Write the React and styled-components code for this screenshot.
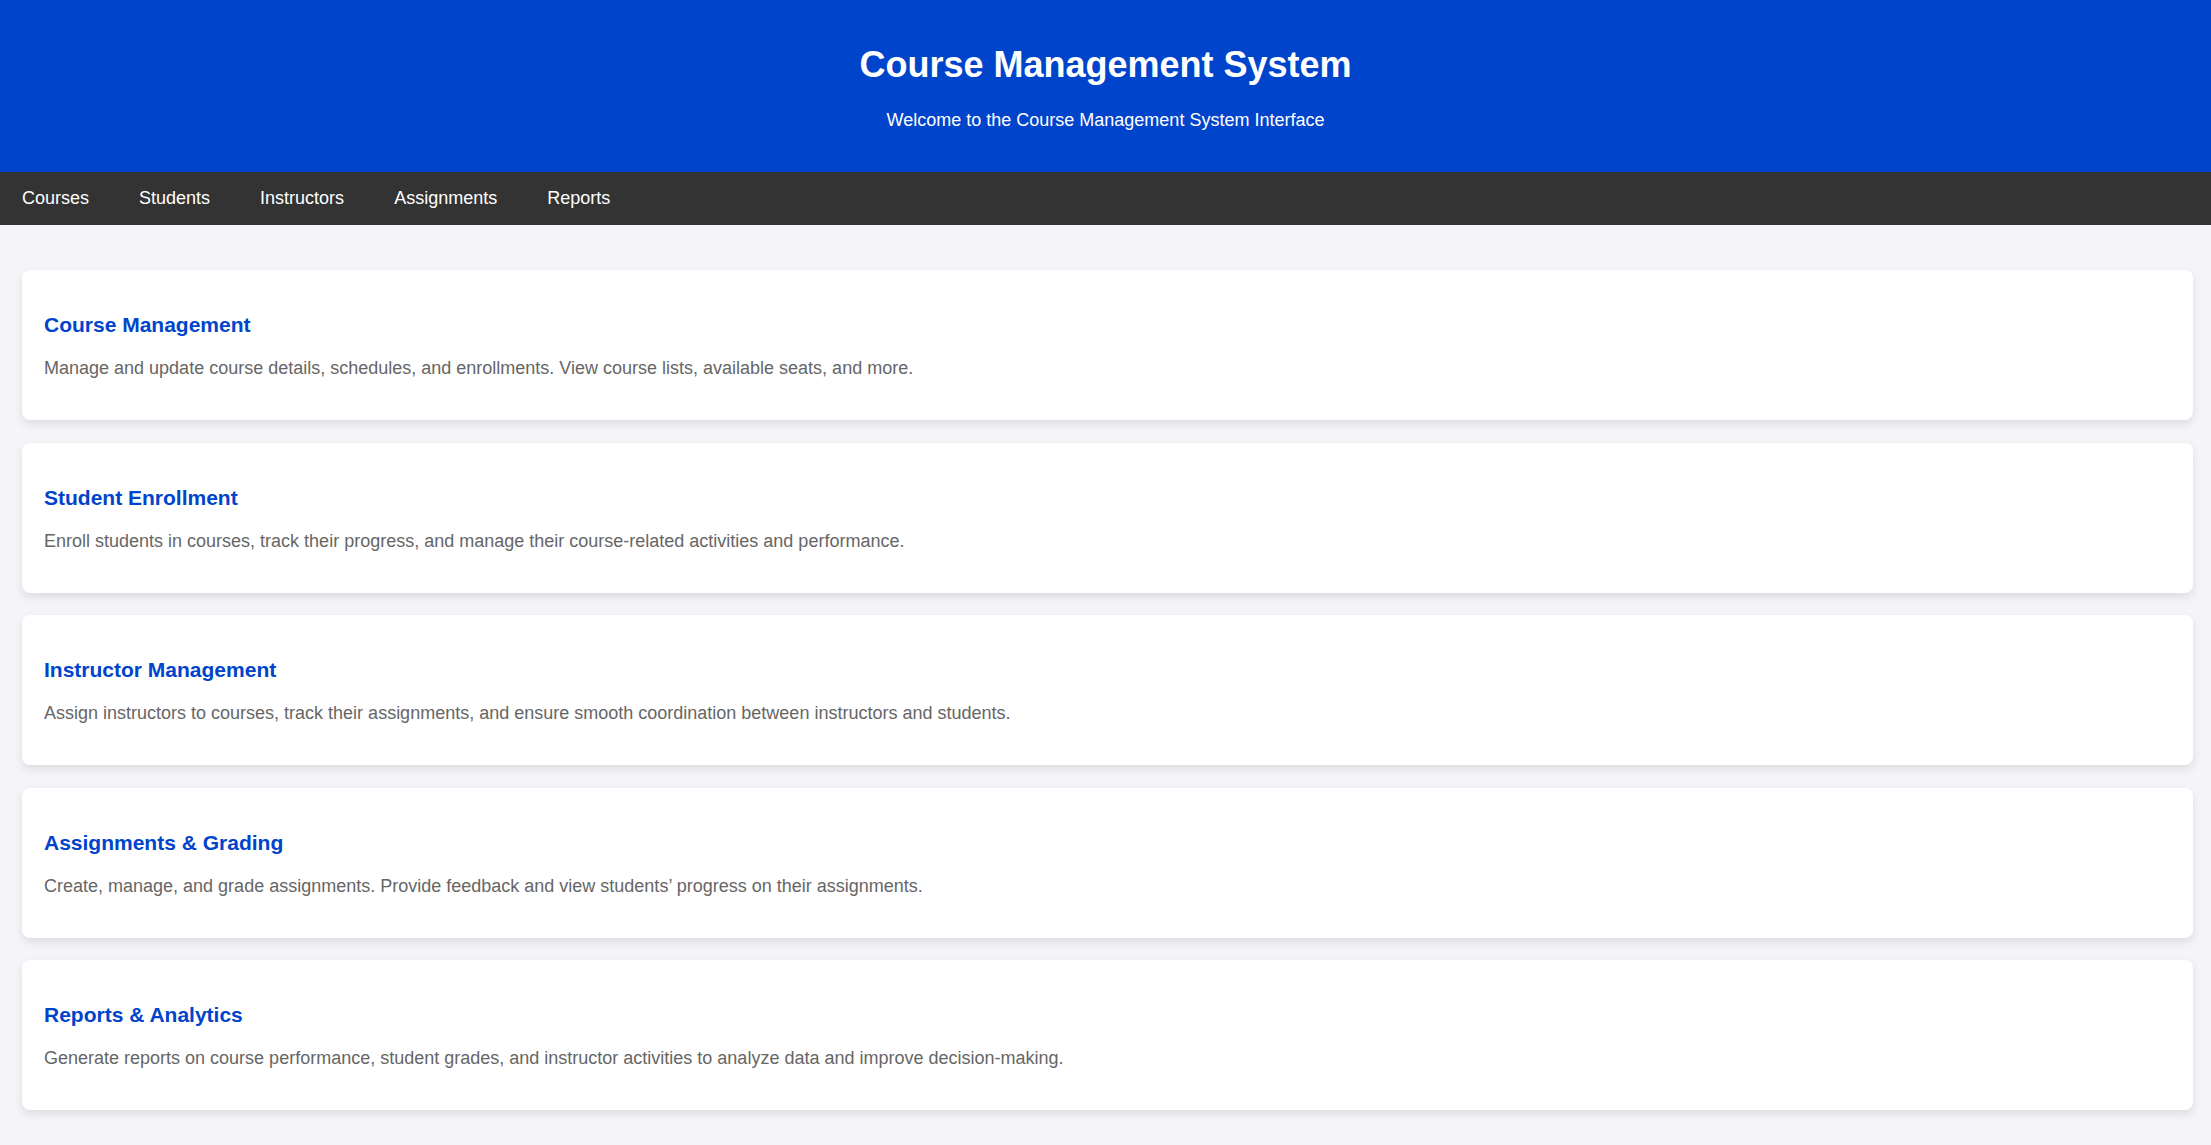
import React from 'react';
import styled, { createGlobalStyle } from 'styled-components';

const GlobalStyle = createGlobalStyle`
    body {
        margin: 0;
        background-color: #f4f4f9;
        font-family: "Liberation Sans", Arial, sans-serif;
        font-size: 18px;
        color: #333;
    }
`;

const Header = styled.header`
    background-color: #0044cc;
    color: white;
    text-align: center;
    padding: 44px 20px 41px;
`;

const HeaderTitle = styled.h1`
    margin: 0 0 24px;
    font-size: 36px;
    font-weight: bold;
`;

const HeaderSubtitle = styled.p`
    margin: 0;
    font-size: 18px;
`;

const NavBar = styled.nav`
    background-color: #333;
    height: 53px;
    display: flex;
    align-items: center;
    gap: 6px;
`;

const NavLink = styled.a`
    color: white;
    text-decoration: none;
    font-size: 18px;
    padding: 16px 22px;
    cursor: pointer;

    &:hover {
        background-color: #444;
    }
`;

const Main = styled.main`
    padding: 45px 18px 40px 22px;
    display: flex;
    flex-direction: column;
    gap: 22.6px;
`;

const Card = styled.section`
    background-color: white;
    border-radius: 8px;
    padding: 43px 22px 41px;
    box-shadow: 0 4px 10px rgba(0, 0, 0, 0.1);
`;

const CardTitle = styled.h3`
    margin: 0 0 21px;
    font-size: 21px;
    font-weight: bold;
    color: #0044cc;
`;

const CardText = styled.p`
    margin: 0;
    font-size: 18px;
    color: #666;
`;

const links = ['Courses', 'Students', 'Instructors', 'Assignments', 'Reports'];

const sections = [
    {
        title: 'Course Management',
        text: 'Manage and update course details, schedules, and enrollments. View course lists, available seats, and more.',
    },
    {
        title: 'Student Enrollment',
        text: 'Enroll students in courses, track their progress, and manage their course-related activities and performance.',
    },
    {
        title: 'Instructor Management',
        text: 'Assign instructors to courses, track their assignments, and ensure smooth coordination between instructors and students.',
    },
    {
        title: 'Assignments & Grading',
        text: 'Create, manage, and grade assignments. Provide feedback and view students\u2019 progress on their assignments.',
    },
    {
        title: 'Reports & Analytics',
        text: 'Generate reports on course performance, student grades, and instructor activities to analyze data and improve decision-making.',
    },
];

function App() {
    return (
        <>
            <GlobalStyle />
            <Header>
                <HeaderTitle>Course Management System</HeaderTitle>
                <HeaderSubtitle>Welcome to the Course Management System Interface</HeaderSubtitle>
            </Header>
            <NavBar>
                {links.map((link) => (
                    <NavLink key={link} href="#">{link}</NavLink>
                ))}
            </NavBar>
            <Main>
                {sections.map((section) => (
                    <Card key={section.title}>
                        <CardTitle>{section.title}</CardTitle>
                        <CardText>{section.text}</CardText>
                    </Card>
                ))}
            </Main>
        </>
    );
}

export default App;
